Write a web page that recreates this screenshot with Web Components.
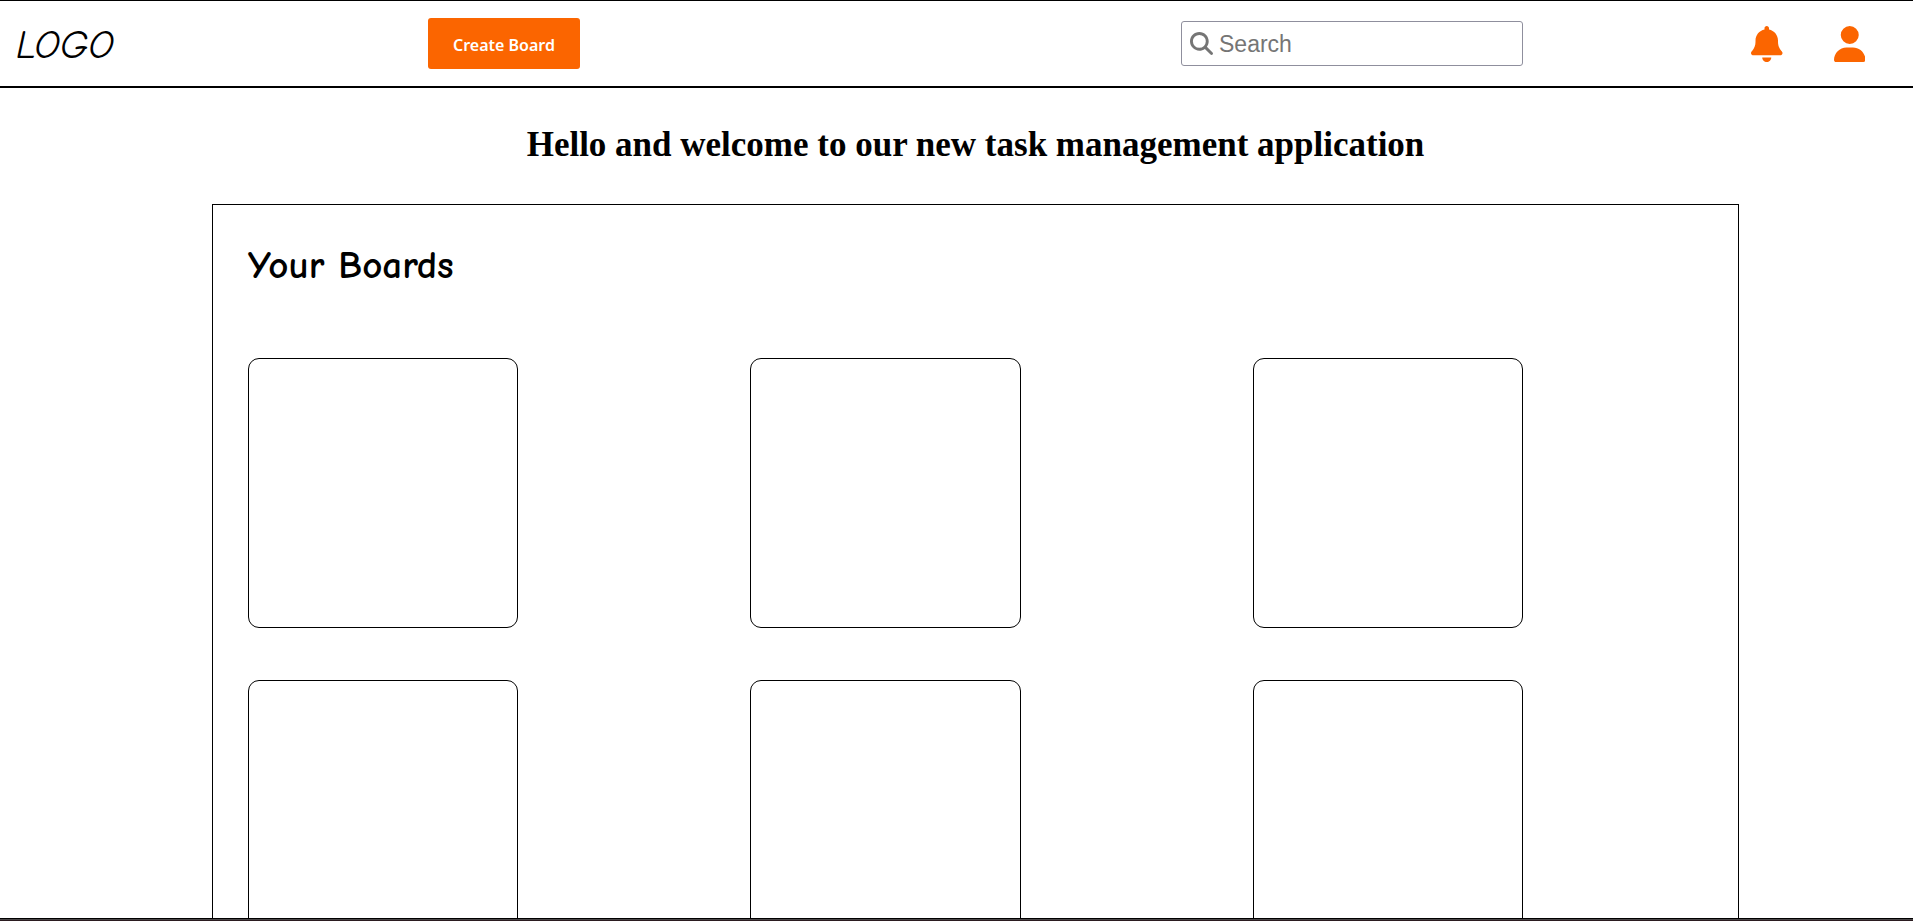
<!DOCTYPE html>
<html lang="en">
<head>
<meta charset="utf-8">
<title>Task management</title>
<style>
  html, body { margin: 0; height: 100%; }
  body { background: #fff; color: #000; font-family: "Liberation Serif", "Times New Roman", serif; }
</style>
</head>
<body>
<task-app></task-app>
<script>
const define = (name, html, setup) => {
  const tpl = document.createElement('template');
  tpl.innerHTML = html;
  customElements.define(name, class extends HTMLElement {
    constructor() {
      super();
      this.attachShadow({ mode: 'open' }).append(tpl.content.cloneNode(true));
      if (setup) setup(this);
    }
  });
};

define('app-icon', `
  <style>
    :host { display: block; height: var(--icon-size, 36px); }
    svg { display: block; height: 100%; fill: currentColor; }
  </style>
  <svg aria-hidden="true"><path/></svg>`, el => {
  const icons = {
    bell: [448, 'M224 0c-17.700 0-32 14.300-32 32l0 19.200C119 66 64 130.600 64 208l0 18.800c0 47-17.300 92.400-48.500 127.600l-7.400 8.300c-8.400 9.400-10.400 22.900-5.300 34.400S19.400 416 32 416l384 0c12.600 0 24-7.400 29.200-18.900s3.100-25-5.300-34.400l-7.400-8.300C401.300 319.200 384 273.900 384 226.800l0-18.800c0-77.400-55-142-128-156.800L256 32c0-17.700-14.300-32-32-32zm45.300 493.300c12-12 18.700-28.300 18.700-45.300l-64 0-64 0c0 17 6.700 33.300 18.700 45.300s28.300 18.700 45.300 18.700s33.300-6.700 45.300-18.700z'],
    user: [448, 'M224 256A128 128 0 1 0 224 0a128 128 0 1 0 0 256zm-45.700 48C79.800 304 0 383.800 0 482.300C0 498.700 13.300 512 29.700 512l388.600 0c16.400 0 29.700-13.300 29.700-29.700C448 383.800 368.200 304 269.700 304l-91.400 0z'],
    search: [512, 'M416 208c0 45.900-14.900 88.300-40 122.700L502.600 457.400c12.500 12.500 12.500 32.800 0 45.300s-32.800 12.500-45.300 0L330.700 376c-34.400 25.200-76.800 40-122.700 40C93.100 416 0 322.900 0 208S93.100 0 208 0S416 93.100 416 208zM208 352a144 144 0 1 0 0-288 144 144 0 1 0 0 288z']
  };
  const [w, d] = icons[el.getAttribute('name')];
  el.shadowRoot.querySelector('svg').setAttribute('viewBox', '0 0 ' + w + ' 512');
  el.shadowRoot.querySelector('path').setAttribute('d', d);
});

define('create-button', `
  <style>
    :host { display: block; }
    button { display: block; padding: 15px 25px 12px; border: 0; border-radius: 3px; background: #fb6500; color: #fff;
      font: 600 16px/24px "Noto Sans", sans-serif; cursor: pointer; }
  </style>
  <button type="button"><slot></slot></button>`);

define('search-box', `
  <style>
    :host { display: block; }
    label { display: flex; align-items: center; gap: 6px; box-sizing: border-box; height: 45px; padding: 0 8px;
      border: 1px solid #8f8f9d; border-radius: 3px; color: #757575; --icon-size: 23px; }
    input { flex: 1; min-width: 0; padding: 0; border: 0; outline: 0; background: none; color: #000;
      font: 23px/28px "Liberation Sans", Arial, sans-serif; }
    input::placeholder { color: #757575; opacity: 1; }
  </style>
  <label><app-icon name="search"></app-icon><input type="search" placeholder="Search" aria-label="Search"></label>`);

define('icon-button', `
  <style>
    :host { display: block; }
    button { display: block; padding: 0; border: 0; background: none; color: #fb6500; cursor: pointer; }
  </style>
  <button type="button"><slot></slot></button>`, el => {
  el.shadowRoot.querySelector('button').setAttribute('aria-label', el.getAttribute('label'));
});

define('app-header', `
  <style>
    :host { display: block; flex: none; border-top: 1px solid #000; border-bottom: 2px solid #000; }
    header { display: grid; grid-template-columns: 428fr 753fr 570fr 162px;
      align-items: center; height: 85px; }
    .logo { justify-self: start; margin-left: 16px; padding-top: 3px; color: #000; text-decoration: none;
      font: italic 40px/52px "Comic Sans MS", "Comic Neue", Lato, cursive; }
    create-button { justify-self: start; }
    search-box { width: 60%; }
    nav { display: flex; gap: 51px; }
  </style>
  <header>
    <a class="logo" href="#">LOGO</a>
    <create-button>Create Board</create-button>
    <search-box></search-box>
    <nav>
      <icon-button label="Notifications"><app-icon name="bell"></app-icon></icon-button>
      <icon-button label="Account"><app-icon name="user"></app-icon></icon-button>
    </nav>
  </header>`);

define('board-card', `
  <style>
    :host { display: block; box-sizing: border-box; width: 60%; aspect-ratio: 1; border: 1px solid #000; border-radius: 11px; }
  </style>
  <slot></slot>`);

define('board-list', `
  <style>
    :host { display: block; border: 1px solid #000; padding: 35px; }
    h2 { margin: 0 0 66px; font: bold 39px/52px "Comic Sans MS", "Comic Neue", Lato, cursive; }
    div { display: grid; grid-template-columns: repeat(3, 1fr); gap: 52px; }
  </style>
  <h2>Your Boards</h2>
  <div><slot></slot></div>`);

define('task-app', `
  <style>
    :host { display: flex; flex-direction: column; height: 100vh; }
    main { flex: 1; min-height: 0; overflow: hidden; padding: 0 174px 0 212px; }
    h1 { margin: 37px 0 39px; font: bold 35px/40px "Liberation Serif", "Times New Roman", serif; text-align: center; }
    footer { flex: none; height: 1px; border-top: 1px solid #000; border-bottom: 1px solid #2b1c20; background: #4b4749; }
  </style>
  <app-header></app-header>
  <main>
    <h1>Hello and welcome to our new task management application</h1>
    <board-list>
      <board-card></board-card><board-card></board-card><board-card></board-card>
      <board-card></board-card><board-card></board-card><board-card></board-card>
    </board-list>
  </main>
  <footer></footer>`);
</script>
</body>
</html>
